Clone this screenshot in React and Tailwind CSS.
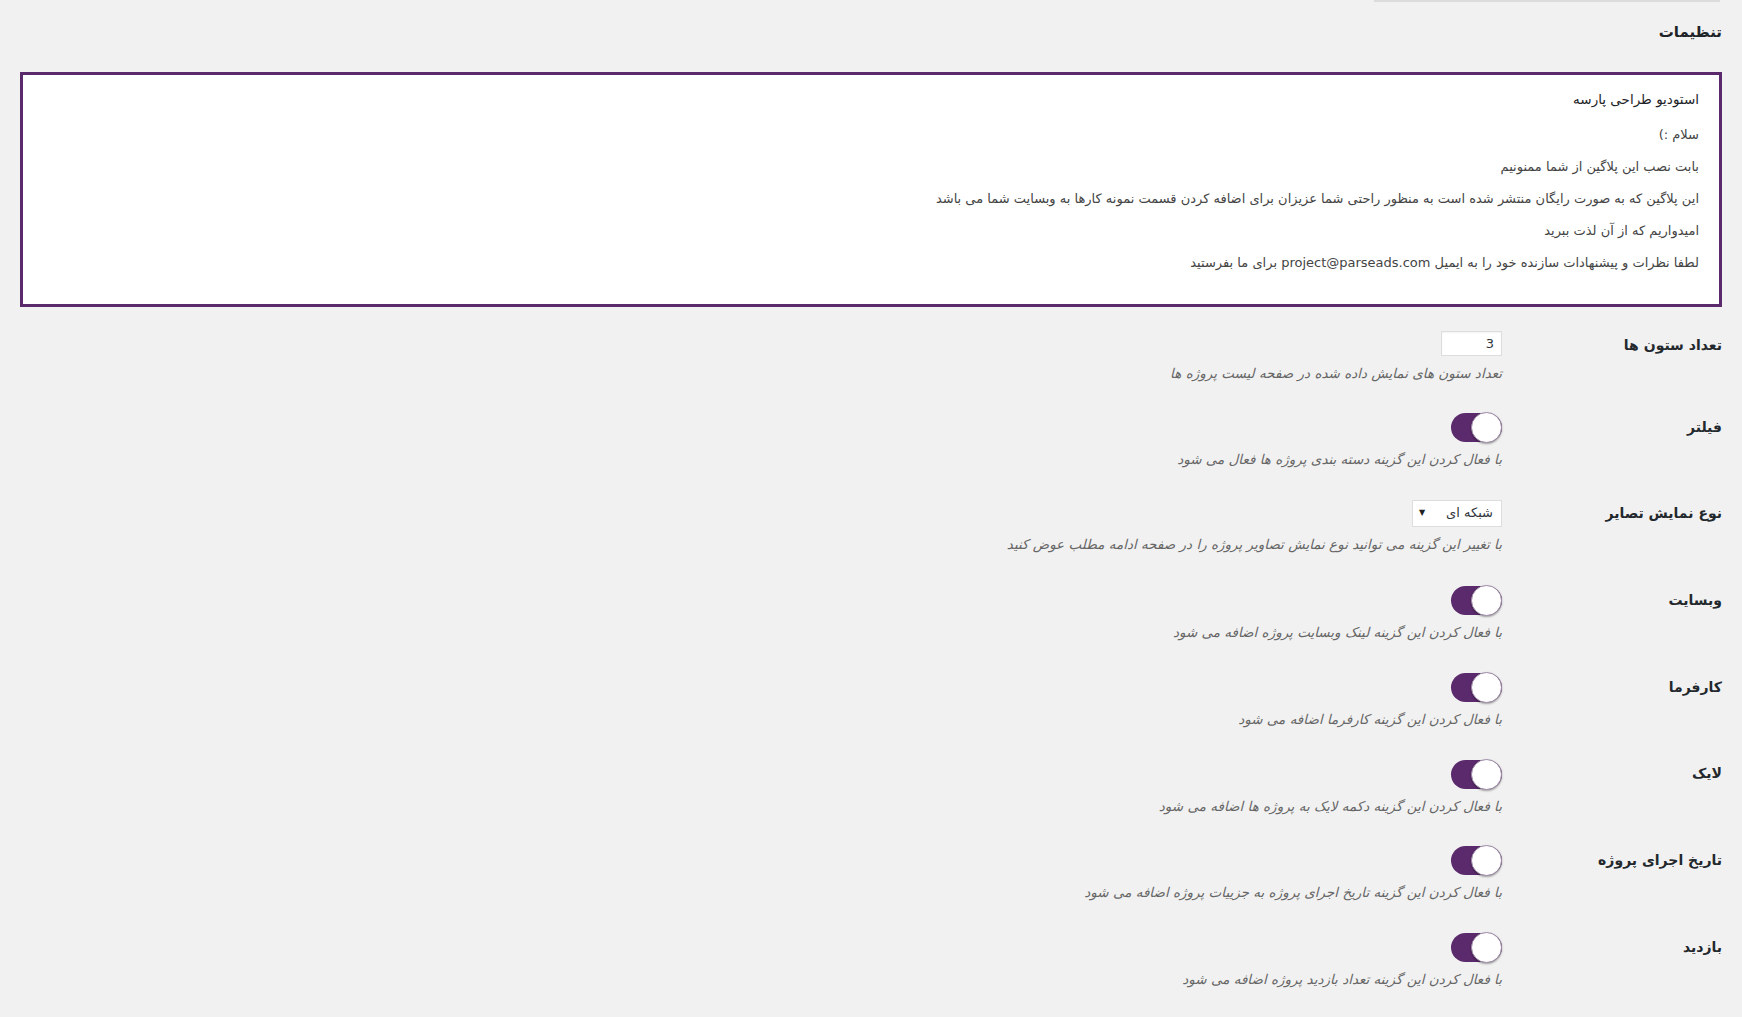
const rows = [
  { label: 'تعداد ستون ها', type: 'input', desc: 'تعداد ستون های نمایش داده شده در صفحه لیست پروژه ها' },
  { label: 'فیلتر', type: 'toggle', desc: 'با فعال کردن این گزینه دسته بندی پروژه ها فعال می شود' },
  { label: 'نوع نمایش تصایر', type: 'select', desc: 'با تغییر این گزینه می توانید نوع نمایش تصاویر پروژه را در صفحه ادامه مطلب عوض کنید' },
  { label: 'وبسایت', type: 'toggle', desc: 'با فعال کردن این گزینه لینک وبسایت پروژه اضافه می شود' },
  { label: 'کارفرما', type: 'toggle', desc: 'با فعال کردن این گزینه کارفرما اضافه می شود' },
  { label: 'لایک', type: 'toggle', desc: 'با فعال کردن این گزینه دکمه لایک به پروژه ها اضافه می شود' },
  { label: 'تاریخ اجرای پروژه', type: 'toggle', desc: 'با فعال کردن این گزینه تاریخ اجرای پروژه به جزییات پروژه اضافه می شود' },
  { label: 'بازدید', type: 'toggle', desc: 'با فعال کردن این گزینه تعداد بازدید پروژه اضافه می شود' },
];

const Toggle = () => (
  // knob sits on the right side (rtl start)
  <div className="flex h-[29px] w-[51px] items-center justify-start rounded-full bg-[#5b2a6c]">
    <div className="h-[31px] w-[31px] rounded-full border border-[#9c8aa6] bg-white shadow-[0_1px_2px_rgba(0,0,0,0.35)]" />
  </div>
);

const Control = ({ type }) => {
  if (type === 'input') {
    return (
      <div className="flex h-[25px] w-[61px] items-center border border-[#ddd] bg-white px-[7px] text-[13px] text-[#32373c] shadow-[inset_0_1px_2px_rgba(0,0,0,0.05)]">
        3
      </div>
    );
  }
  if (type === 'select') {
    return (
      <div className="flex h-[27px] w-[90px] items-center justify-between border border-[#ddd] bg-white pl-[6px] pr-[8px] text-[13px] text-[#32373c]">
        <span>شبکه ای</span>
        <span className="text-[8px] text-[#222]">▼</span>
      </div>
    );
  }
  return <Toggle />;
};

const App = () => {
  return (
    <div dir="rtl" className="min-h-screen bg-[#f1f1f1] px-5 font-['DejaVu_Sans',sans-serif] text-[#23282d]">
      <div className="mr-[2px] h-[2px] w-[346px] bg-[#dcdcdc]" />
      <h1 className="mt-[19px] text-[15px] font-bold leading-[22px] text-[#1d2327]">تنظیمات</h1>

      <div className="mt-[29px] h-[235px] border-[3px] border-[#5b2a6c] bg-white pr-[20px] pt-[15px]">
        <h2 className="text-[13.5px] font-normal leading-[18px] text-[#1d2327]">استودیو طراحی پارسه</h2>
        <div className="mt-[18px] flex flex-col gap-[14px] text-[13px] leading-[18px] text-[#444]">
          <p>سلام :)</p>
          <p>بابت نصب این پلاگین از شما ممنونیم</p>
          <p>این پلاگین که به صورت رایگان منتشر شده است به منظور راحتی شما عزیزان برای اضافه کردن قسمت نمونه کارها به وبسایت شما می باشد</p>
          <p>امیدواریم که از آن لذت ببرید</p>
          <p>
            لطفا نظرات و پیشنهادات سازنده خود را به ایمیل <span dir="ltr">project@parseads.com</span> برای ما بفرستید
          </p>
        </div>
      </div>

      <div className="mt-[9px] flex flex-col">
        {rows.map((row, i) => (
          <div key={row.label} className={`flex pt-[15px] ${i === 0 ? 'h-[82px]' : 'h-[86.7px]'}`}>
            <div className="w-[220px] shrink-0">
              <div className="flex h-[28px] items-center text-[14px] font-semibold text-[#23282d]">{row.label}</div>
            </div>
            <div className="flex flex-col items-start">
              <Control type={row.type} />
              <p className="mt-[8px] text-[13.5px] italic leading-[18px] text-[#666]">{row.desc}</p>
            </div>
          </div>
        ))}
      </div>
    </div>
  );
};

export default App;
